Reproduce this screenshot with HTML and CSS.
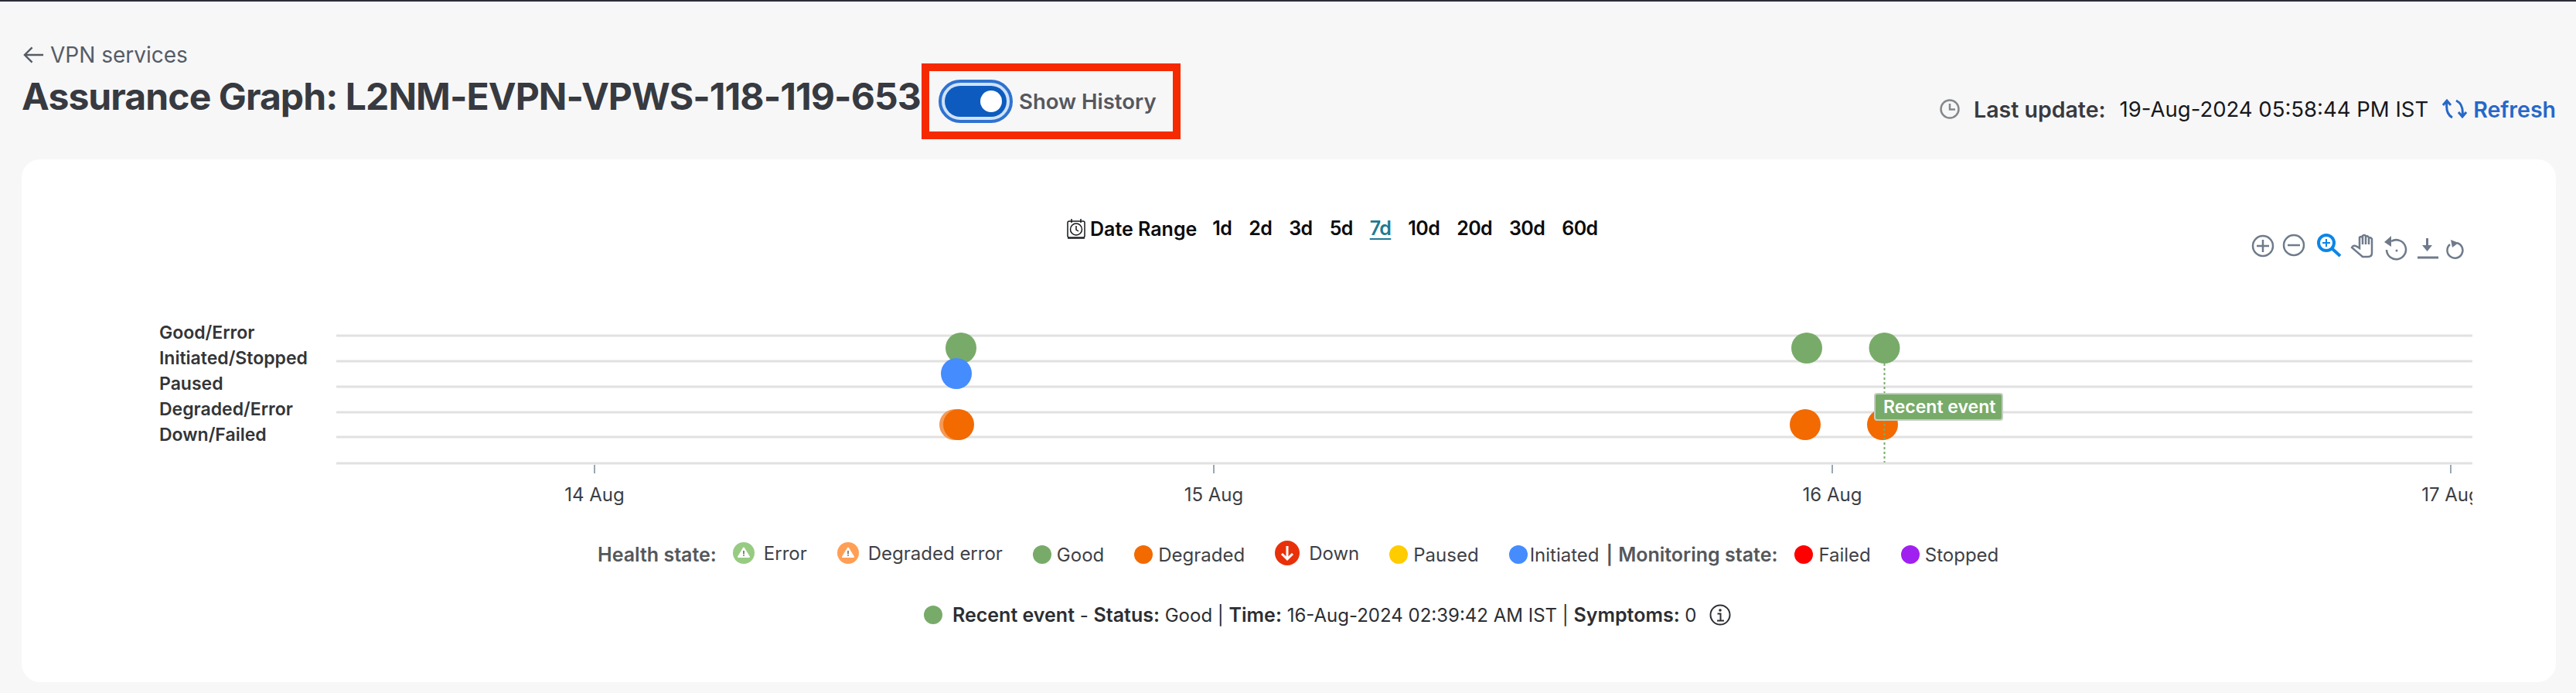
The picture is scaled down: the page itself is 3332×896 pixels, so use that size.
FILE: index.html
```html
<!DOCTYPE html>
<html lang="en">
<head>
<meta charset="utf-8">
<title>Assurance Graph</title>
<link rel="stylesheet" href="styles.css">
</head>
<body>
<div class="page">
  <header class="header">
    <div class="header-left">
      <a class="back"><svg class="back-arrow" viewBox="0 0 28 24"><path d="M27 12H2M12 2 2 12l10 10"/></svg>VPN services</a>
      <div class="title-row">
        <h1 class="title">Assurance Graph: L2NM-EVPN-VPWS-118-119-653</h1>
        <div class="history-box">
          <span class="toggle"><span class="toggle-track"><span class="toggle-knob"></span></span></span>
          <span class="history-label">Show History</span>
        </div>
      </div>
    </div>
    <div class="update">
      <svg class="clock" viewBox="0 0 26 26"><circle cx="13" cy="13" r="11.5"/><path d="M13 6v7.5h7"/></svg>
      <span class="update-label">Last update:</span>
      <span class="update-time">19-Aug-2024 05:58:44 PM IST</span>
      <a class="refresh"><svg class="refresh-icon" viewBox="0 0 32 32"><path d="M13 27Q4 22 6 7M1 11l5-6 5 6M18 5q10 5 8 20M21 20l5 6 5-6"/></svg>Refresh</a>
    </div>
  </header>

  <main class="card">
    <div class="controls">
      <div class="range">
        <svg class="range-icon" viewBox="0 0 24 26"><rect x="1" y="3" width="22" height="21" rx="2"/><path d="M6 0v5M18 0v5M1 25h22"/><circle cx="12" cy="13.500" r="7.500"/><path d="M12 9v5l3 2"/></svg>
        <span class="range-title">Date Range</span>
        <a class="range-item">1d</a><a class="range-item">2d</a><a class="range-item">3d</a><a class="range-item">5d</a>
        <a class="range-item is-active">7d</a>
        <a class="range-item">10d</a><a class="range-item">20d</a><a class="range-item">30d</a><a class="range-item">60d</a>
      </div>
      <svg class="toolbar" viewBox="2905 296 290 44">
        <g class="tool">
          <circle cx="2927" cy="317" r="13"/><path d="M2927 309v16M2919 317h16"/>
          <circle cx="2967" cy="316" r="13"/><path d="M2959 316h16"/>
          <path d="M3056 331h7q5 0 5-5V308q-2-3-4-1v-1q-2-3-4-1v-1q-2-2-4 0v2q-2-2-4 0v14l-3-2q-5-3-7 1zM3056 305v10M3060 305v10M3064 307v8"/>
          <path d="M3087 322a12.500 12.500 0 1 0 6-11"/><path class="tool-fill" d="M3093 304v14l-9-6z"/><circle class="tool-fill" cx="3100" cy="323" r="1.500"/>
          <path class="tool-thick" d="M3127 332h27"/><path class="tool-fill" d="M3138 307h3v9h5l-6.500 8-6.500-8h5z"/>
          <path d="M3178 313a10 10 0 1 1-9 2"/><path class="tool-fill" d="M3170 309l10 4-8 6z"/>
        </g>
        <g class="tool-active">
          <circle cx="3009" cy="313" r="10"/><path d="M3016 320l11 10"/><path class="tool-thin" d="M3009 308v10M3004 313h10"/>
        </g>
      </svg>
    </div>

    <svg class="chart" viewBox="28 400 3278 260">
      <defs><clipPath id="plot"><rect x="435" y="400" width="2763" height="260"/></clipPath></defs>
      <text class="row-label" x="206" y="438">Good/Error</text>
      <text class="row-label" x="206" y="471">Initiated/Stopped</text>
      <text class="row-label" x="206" y="504">Paused</text>
      <text class="row-label" x="206" y="537">Degraded/Error</text>
      <text class="row-label" x="206" y="570">Down/Failed</text>
      <path class="grid" d="M435 434H3198M435 467H3198M435 500H3198M435 533H3198M435 565H3198M435 599H3198"/>
      <path class="tick" d="M769 601v11M1570 601v11M2370 601v11M3170 601v11"/>
      <g clip-path="url(#plot)">
        <text class="tick-label" x="769" y="648">14 Aug</text>
        <text class="tick-label" x="1570" y="648">15 Aug</text>
        <text class="tick-label" x="2370" y="648">16 Aug</text>
        <text class="tick-label" x="3170" y="648">17 Aug</text>
      </g>
      <circle class="pt-good" cx="1243" cy="450" r="20"/>
      <circle class="pt-init" cx="1237" cy="483" r="20"/>
      <circle class="pt-degraded-soft" cx="1235" cy="549" r="20"/>
      <circle class="pt-degraded" cx="1240" cy="549" r="20"/>
      <circle class="pt-good" cx="2337" cy="450" r="20"/>
      <circle class="pt-good" cx="2437.500" cy="450" r="20"/>
      <circle class="pt-degraded" cx="2335" cy="549" r="20"/>
      <circle class="pt-degraded" cx="2435" cy="549" r="20"/>
      <path class="recent-line" d="M2437.500 470V598"/>
      <rect class="recent-tag" x="2425" y="509" width="165" height="34" rx="3"/>
      <text class="recent-text" x="2436" y="534">Recent event</text>
    </svg>

    <div class="legend">
      <span class="legend-head legend-lead">Health state:</span>
      <span class="legend-item is-raised"><svg class="legend-icon" viewBox="0 0 28 28"><circle class="fill-error" cx="14" cy="14" r="14"/><path class="glyph" d="M14 7.500 21 19H7z"/><path class="glyph-mark" d="M14 11v4.500M14 16.500v1.500"/></svg>Error</span>
      <span class="legend-item is-raised"><svg class="legend-icon" viewBox="0 0 28 28"><circle class="fill-derror" cx="14" cy="14" r="14"/><path class="glyph" d="M14 7.500 21 19H7z"/><path class="glyph-mark" d="M14 11v4.500M14 16.500v1.500"/></svg>Degraded error</span>
      <span class="legend-item"><span class="dot dot-good"></span>Good</span>
      <span class="legend-item"><span class="dot dot-degraded"></span>Degraded</span>
      <span class="legend-item is-raised"><svg class="legend-icon legend-icon-lg" viewBox="0 0 32 32"><circle class="fill-down" cx="16" cy="16" r="16"/><path class="glyph-arrow" d="M16 7v17M9 17l7 7 7-7"/></svg>Down</span>
      <span class="legend-item"><span class="dot dot-paused"></span>Paused</span>
      <span class="legend-item legend-tail"><span class="dot dot-init"></span>Initiated<span class="legend-sep">|</span><span class="legend-head legend-mon">Monitoring state:</span></span>
      <span class="legend-item"><span class="dot dot-failed"></span>Failed</span>
      <span class="legend-item"><span class="dot dot-stopped"></span>Stopped</span>
    </div>

    <div class="recent">
      <span class="dot dot-good"></span>
      <span class="recent-body"><b>Recent event</b> - <b>Status:</b> Good | <b>Time:</b> 16-Aug-2024 02:39:42 AM IST | <b>Symptoms:</b> 0</span>
      <svg class="info" viewBox="0 0 28 28"><circle cx="14" cy="14" r="12.500"/><path d="M10.500 12.500H14.500V21M10 21.500h9"/><circle class="info-dot" cx="14" cy="8" r="1.800"/></svg>
    </div>
  </main>
</div>
</body>
</html>
```

FILE: styles.css
```css
* { box-sizing: border-box; }
html, body { margin: 0; padding: 0; }
body {
  background: #f7f7f8;
  border-top: 2px solid #2a2d35;
  font-family: Inter, "Liberation Sans", sans-serif;
  height: 896px;
  overflow: hidden;
}
.page { padding: 58px 26px 0 28px; }

.header { display: flex; justify-content: space-between; align-items: flex-start; }
.back {
  display: flex; align-items: center; gap: 8px;
  height: 22px; margin-left: 2px;
  font-size: 28px; color: #555c66;
}
.back-arrow { width: 27px; height: 24px; fill: none; stroke: #555c66; stroke-width: 2.500; }
.title-row { display: flex; align-items: flex-start; height: 98px; }
.title {
  width: 1161px;
  margin: 18px 0 0 0;
  font-size: 48px; line-height: 50px; font-weight: 700;
  letter-spacing: -0.9px;
  color: #373a40; white-space: nowrap;
}
.history-box {
  display: flex; align-items: center;
  width: 335px; height: 98px;
  margin-left: 3px; padding: 0 0 0 12px;
  border: 10px solid #f52a00;
}
.toggle {
  display: block; flex: none; width: 96px; height: 56px; padding: 4px;
  border: 4px solid #2f72d0; border-radius: 28px; background: #cfe2fa;
}
.toggle-track {
  display: flex; justify-content: flex-end; align-items: center;
  height: 40px; padding-right: 6px;
  border-radius: 20px; background: #0d5bbf;
}
.toggle-knob { width: 28px; height: 28px; border-radius: 50%; background: #fff; }
.history-label { margin-left: 8px; font-size: 27.500px; font-weight: 600; color: #55585e; white-space: nowrap; }

.update { display: flex; align-items: center; height: 34px; margin-top: 64px; font-size: 27.500px; white-space: nowrap; }
.clock { width: 26px; height: 26px; fill: none; stroke: #85888c; stroke-width: 2.500; }
.update-label { margin-left: 18px; font-size: 28.500px; font-weight: 600; color: #373a40; }
.update-time { margin-left: 18px; color: #16181c; }
.refresh { display: flex; align-items: center; margin-left: 18px; font-size: 28.500px; font-weight: 600; color: #2668c8; }
.refresh-icon { width: 32px; height: 32px; margin-right: 8px; fill: none; stroke: #2668c8; stroke-width: 3; }

.card { height: 676px; margin-top: 26px; padding-top: 77px; background: #fff; border-radius: 24px; }
.controls { display: flex; justify-content: space-between; align-items: flex-start; padding: 0 111px 0 1352px; }
.range { display: flex; align-items: center; gap: 22px; height: 25px; font-size: 25px; font-weight: 600; color: #0b0c0e; }
.range-icon { width: 24px; height: 26px; margin-right: -16px; fill: none; stroke: #16181c; stroke-width: 1.500; }
.range-title { margin-right: -2px; }
.range-item { line-height: 25px; letter-spacing: -0.6px; }
.is-active { color: #1d7a94; text-decoration: underline; text-underline-offset: 4px; text-decoration-thickness: 2px; }
.toolbar { display: block; width: 290px; height: 44px; margin-top: 14px; fill: none; }
.tool { stroke: #6f7b8b; stroke-width: 2.500; }
.tool-fill { fill: #6f7b8b; stroke: none; }
.tool-thick { stroke-width: 3; }
.tool-active { stroke: #0b86e8; stroke-width: 4; }
.tool-thin { stroke-width: 2; }

.chart { display: block; width: 3278px; height: 260px; margin-top: 59px; }
.row-label { font-size: 23px; font-weight: 600; fill: #333538; }
.grid { fill: none; stroke: #e1e1e1; stroke-width: 3; }
.tick { fill: none; stroke: #7a8a9a; stroke-width: 1.500; }
.tick-label { font-size: 24px; fill: #3b3e43; text-anchor: middle; }
.pt-good { fill: #78ab69; }
.pt-init { fill: #458cff; }
.pt-degraded { fill: #f26a00; }
.pt-degraded-soft { fill: #f59a55; }
.recent-line { fill: none; stroke: #78ab69; stroke-width: 2; stroke-dasharray: 3 3; }
.recent-tag { fill: #78ab69; stroke: #c4ccc2; stroke-width: 2; }
.recent-text { font-size: 23px; font-weight: 600; fill: #fff; }

.legend { display: flex; align-items: center; gap: 39px; height: 34px; margin-top: 40px; padding-left: 745px; font-size: 24px; color: #3e4147; white-space: nowrap; }
.legend-head { font-size: 25px; font-weight: 600; color: #55575b; }
.legend-lead { margin-right: -18px; }
.legend-item { display: flex; align-items: center; gap: 7px; }
.is-raised { gap: 12px; margin-top: -4px; }
.legend-icon { width: 28px; height: 28px; }
.legend-icon-lg { width: 32px; height: 32px; }
.legend-tail { gap: 3px; margin-right: -17px; }
.legend-sep { margin-left: 6px; font-weight: 600; color: #55575b; }
.legend-mon { margin-left: 4px; }
.dot { display: block; flex: none; width: 24px; height: 24px; border-radius: 50%; }
.dot-good { background: #78ab69; }
.dot-degraded { background: #f26a00; }
.dot-paused { background: #ffcc00; }
.dot-init { background: #458cff; }
.dot-failed { background: #ff0000; }
.dot-stopped { background: #a020f0; }
.fill-error { fill: #97cb82; }
.fill-derror { fill: #ff9f55; }
.fill-down { fill: #e8310a; }
.glyph { fill: #fff; stroke: #fff; stroke-width: 2; stroke-linejoin: round; }
.glyph-mark { fill: none; stroke: #5a6054; stroke-width: 1.500; }
.glyph-arrow { fill: none; stroke: #fff; stroke-width: 3; }

.recent { display: flex; align-items: center; height: 34px; margin-top: 44px; padding-left: 1167px; font-size: 24px; color: #2c2e33; white-space: nowrap; }
.recent-body { margin-left: 13px; }
.recent-body b { font-size: 25px; font-weight: 600; }
.info { width: 28px; height: 28px; margin-left: 16px; fill: none; stroke: #2c2e33; stroke-width: 2; }
.info-dot { fill: #2c2e33; stroke: none; }
```
